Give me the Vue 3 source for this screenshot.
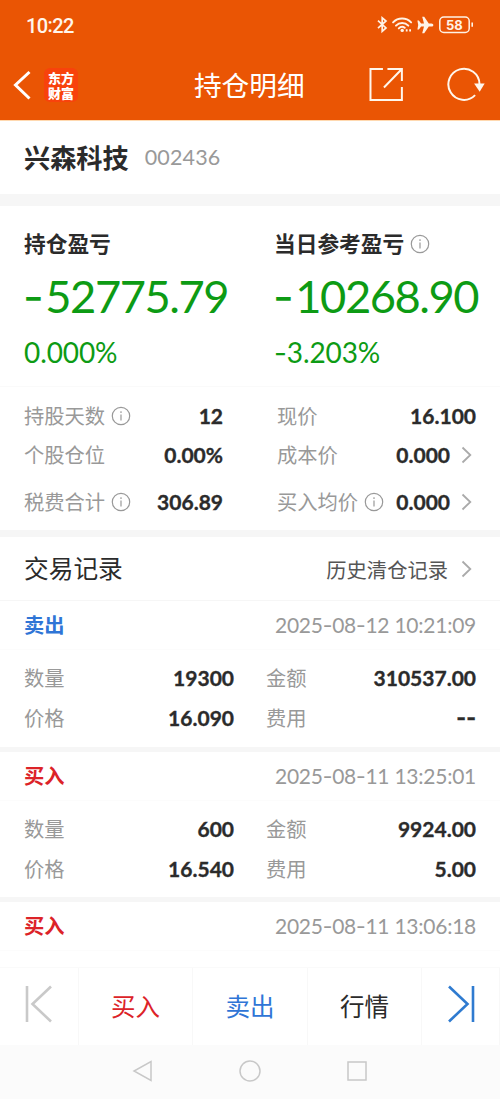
<script setup>
const left = [
  { label: '持股天数', info: true, value: '12' },
  { label: '个股仓位', value: '0.00%' },
  { label: '税费合计', info: true, value: '306.89' },
]
const right = [
  { label: '现价', value: '16.100' },
  { label: '成本价', value: '0.000', link: true },
  { label: '买入均价', info: true, value: '0.000', link: true },
]
const profits = [
  { title: '持仓盈亏', total: '52775.79', sign: '', rate: '0.000%' },
  { title: '当日参考盈亏', info: true, total: '10268.90', sign: '-', rate: '3.203%' },
]
const records = [
  { type: '卖出', side: 'sell', time: '2025-08-12 10:21:09', qty: '19300', amount: '310537.00', price: '16.090', fee: '--' },
  { type: '买入', side: 'buy', time: '2025-08-11 13:25:01', qty: '600', amount: '9924.00', price: '16.540', fee: '5.00' },
  { type: '买入', side: 'buy', time: '2025-08-11 13:06:18' },
]
// Dashes are set in a wider face than the digits around them.
const parts = (text) => text.split(/(-)/).filter(Boolean)
</script>

<template>
  <div class="app">
    <header class="top">
      <div class="status">
        <span class="clock">10<span class="colon">:</span>22</span>
        <svg class="status-icons" width="100" height="20" viewBox="0 0 100 20" fill="none" stroke="#fff3e6">
          <path d="M3 5.6 11 13 7.2 16.4V2.8L11 6 3 13.2" stroke-width="1.7" />
          <path d="M18.1 7.4a12.6 12.6 0 0 1 18 0M21 10.6a8.6 8.6 0 0 1 12.3 0M23.8 13.4a4.7 4.7 0 0 1 6-.6" stroke-width="2" stroke-linecap="round" />
          <circle cx="27.2" cy="15.4" r="1.7" fill="#fff3e6" stroke="none" />
          <path d="M30.8 15.4h1.8M34.2 15.4H36" stroke-width="2.2" />
          <path d="M42.4 5.6h1.5l2.2 2.8h2.9L47.2 1.8h2l4.6 6.6h2.6c2.6 0 2.6 3.2 0 3.2h-2.6l-4.6 6.6h-2l1.8-6.6h-2.9l-2.2 2.8h-1.5l.8-4.4z" fill="#fff3e6" stroke="none" />
          <rect x="64.8" y="2" width="29.4" height="15.4" rx="4" stroke-width="1.5" />
          <path d="M97.2 7.6v4.2" stroke-width="1.6" />
          <text x="79.4" y="14.7" text-anchor="middle" class="battery">58</text>
        </svg>
      </div>
      <div class="title-bar">
        <svg class="back" width="20" height="32" viewBox="0 0 20 32" fill="none" stroke="#fff" stroke-width="3"><path d="M17.5 3 3.5 16l14 13.5" /></svg>
        <div class="logo"><span>东方<br>财富</span></div>
        <h1>持仓明细</h1>
        <svg class="share" width="36" height="36" viewBox="0 0 36 36" fill="none" stroke="#fff6ec" stroke-width="2"><path d="M15 2H2.5V33H34V20M19.5 2H34V14M34 2 16 20.5" /></svg>
        <svg class="reload" width="40" height="36" viewBox="0 0 40 36" fill="none" stroke="#fff6ec" stroke-width="2"><path d="M29.2 28.2A15.6 15.6 0 1 1 33.6 17" /><path d="M28.2 16.5h10.6l-5 8.2z" fill="#fff6ec" stroke="none" /></svg>
      </div>
    </header>

    <section class="stock"><h2>兴森科技</h2><span>002436</span></section>

    <section class="profits">
      <div v-for="p in profits" :key="p.title" class="profit">
        <h3>{{ p.title }}<svg v-if="p.info" class="info" viewBox="0 0 20 20"><circle cx="10" cy="10" r="8.7" /><path d="M10 8.5v6M10 5.2v1.8" /></svg></h3>
        <div class="big"><span class="dash">-</span>{{ p.total }}</div>
        <div class="rate"><span v-if="p.sign" class="dash">{{ p.sign }}</span>{{ p.rate }}</div>
      </div>
    </section>

    <section class="details">
      <div v-for="(column, c) in [left, right]" :key="c" class="column">
        <div v-for="item in column" :key="item.label" class="item">
          <span class="label">{{ item.label }}</span>
          <svg v-if="item.info" class="info" viewBox="0 0 20 20"><circle cx="10" cy="10" r="8.7" /><path d="M10 8.5v6M10 5.2v1.8" /></svg>
          <b class="num">{{ item.value }}</b>
          <svg v-if="item.link" class="chev" viewBox="0 0 12 18"><path d="M1.5 1.5 9.3 9l-7.8 7.5" /></svg>
        </div>
      </div>
    </section>

    <section class="history">
      <h2>交易记录</h2>
      <span>历史清仓记录</span>
      <svg class="chev" viewBox="0 0 12 18"><path d="M1.5 1.5 9.3 9l-7.8 7.5" /></svg>
    </section>

    <main class="records">
      <article v-for="r in records" :key="r.time" class="record">
        <div class="record-head">
          <b :class="r.side">{{ r.type }}</b>
          <time><span v-for="(s, i) in parts(r.time)" :key="i" :class="{ dash: s === '-' }">{{ s }}</span></time>
        </div>
        <div v-if="r.qty" class="record-body">
          <span class="label">数量</span><b class="num">{{ r.qty }}</b>
          <span class="label second">金额</span><b class="num">{{ r.amount }}</b>
          <span class="label">价格</span><b class="num">{{ r.price }}</b>
          <span class="label second">费用</span><b class="num" :class="{ dash: r.fee === '--' }">{{ r.fee }}</b>
        </div>
      </article>
    </main>

    <footer class="actions">
      <div><svg width="30" height="40" viewBox="0 0 30 40" fill="none" stroke="#c9c9c9" stroke-width="2.6"><path d="M3 2v36M27 2.5 8.5 20 27 37.5" /></svg></div>
      <div class="buy">买入</div>
      <div class="sell">卖出</div>
      <div>行情</div>
      <div><svg width="30" height="40" viewBox="0 0 30 40" fill="none" stroke="#2f7bd0" stroke-width="2.6"><path d="M27 2v36M3 2.5 21.5 20 3 37.5" /></svg></div>
    </footer>
    <nav class="system">
      <svg width="22" height="24" viewBox="0 0 22 24"><path d="M19 2.5v19L2 12z" /></svg>
      <svg width="24" height="24" viewBox="0 0 24 24"><circle cx="12" cy="12" r="10" /></svg>
      <svg width="22" height="24" viewBox="0 0 22 24"><rect x="2" y="3" width="18" height="18" /></svg>
    </nav>
  </div>
</template>

<style>
body { margin: 0; background: #fff; }
</style>

<style scoped>
* { box-sizing: border-box; }
.app { width: 500px; height: 1099px; overflow: hidden; display: flex; flex-direction: column; background: #fff; color: #2b2b2b; font-family: Lato, "Noto Sans CJK SC", sans-serif; white-space: nowrap; }
h1, h2, h3 { margin: 0; font-weight: 400; }
.top { flex: none; height: 121px; background: #ea5504; border-bottom: 1px solid #ffd9b0; color: #fff; }
.status { height: 50px; padding: 15px 25px 0 26px; display: flex; justify-content: space-between; }
.clock { font: 500 20px/22px Roboto, sans-serif; letter-spacing: -.6px; color: #fff6ec; }
.colon { position: relative; top: -1.5px; }
.status-icons { display: block; }
.battery { font: 700 13px Inter, sans-serif; fill: #fff3e6; stroke: none; }
.title-bar { height: 70px; display: flex; align-items: center; padding: 0 14px 0 12px; }
.back { flex: none; margin-right: 12px; }
.logo { width: 34px; height: 34px; border-radius: 6px; background: #f8420c; display: flex; align-items: center; justify-content: center; font: 900 13px/15px "Noto Sans CJK SC", sans-serif; }
.title-bar h1 { margin-left: 116px; width: 175px; font-size: 27.7px; line-height: 40px; padding-top: 1px; }
.share { margin-right: 42px; }
.stock { flex: none; height: 85px; border-bottom: 12px solid #f6f6f6; padding: 0 24px; display: flex; align-items: center; }
.stock h2 { font-size: 26.2px; line-height: 36px; font-weight: 700; }
.stock span { margin-left: 16px; margin-bottom: 2px; font-size: 21.5px; letter-spacing: .15px; color: #999; }
.profits { flex: none; height: 180px; padding: 22px 0 0 24px; display: grid; grid-template-columns: 250px 1fr; }
.profit h3 { font-size: 21.7px; line-height: 32px; font-weight: 700; display: flex; align-items: center; }
.dash { font-family: Inter, sans-serif; }
.big { color: #0d9b14; font-size: 45.3px; line-height: 54px; height: 54px; margin-top: 9px; letter-spacing: -1.5px; }
.big .dash { margin-left: -1px; margin-right: 3px; }
.rate { color: #0d9b14; font-size: 28px; line-height: 36px; height: 36px; margin-top: 11px; letter-spacing: -.1px; }
.info { flex: none; width: 20px; height: 20px; margin-left: 6px; fill: none; stroke: #999; stroke-width: 1.2; }
.details { flex: none; height: 151px; border-top: 1px solid #fafafa; border-bottom: 7px solid #f6f6f6; padding: 9px 24px 0; display: grid; grid-template-columns: 199px 199px; gap: 54px; }
.item { height: 39px; display: flex; align-items: center; }
.item:nth-child(3) { height: 56px; }
.label { font-size: 20.3px; line-height: 30px; color: #999; }
.num { font-size: 21px; line-height: 30px; font-weight: 700; margin-left: auto; -webkit-text-stroke: .35px currentColor; }
.chev { flex: none; width: 12px; height: 18px; margin-left: 11px; margin-right: 3px; fill: none; stroke: #aaa; stroke-width: 1.8; }
.history { flex: none; height: 63px; padding: 1px 24px 0; display: flex; align-items: center; }
.history h2 { font-size: 24.7px; line-height: 36px; margin-right: auto; }
.history span { font-size: 20.3px; color: #555; }
.history .chev { margin-left: 13px; }
.records { flex: none; height: 367px; overflow: hidden; }
.record { height: 152px; border-bottom: 5px solid #f6f6f6; border-top: 1px solid #f6f6f6; }
.record + .record { height: 150px; border-top: 0; }
.record-head { height: 49px; padding: 0 24px; display: flex; align-items: center; justify-content: space-between; border-bottom: 1px solid #fcfcfc; font-size: 20.3px; line-height: 30px; }
.record-head time { color: #999; font-size: 21px; letter-spacing: -.25px; }
.record-body { padding: 8px 24px 0; display: grid; grid-template-columns: 60px 150px 90px 152px; grid-auto-rows: 40px; align-items: center; }
.record-body .num { text-align: right; margin: 0; }
.second { padding-left: 32px; }
.sell { color: #2f75d6; }
.buy { color: #dc2328; }
.actions { flex: none; height: 78px; display: grid; grid-template-columns: 79px 114px 115px 114px 78px; border-top: 1px solid #fafafa; font-size: 24.5px; }
.actions div { display: flex; align-items: center; justify-content: center; padding-bottom: 3px; border-right: 1px solid #f8f8f8; }
.actions svg { margin-bottom: 3px; }
.system { flex: 1; background: #fbfbfb; display: flex; justify-content: center; gap: 84px; padding-top: 14px; }
.system svg { fill: none; stroke: #c8c8c8; stroke-width: 1.5; }
</style>
